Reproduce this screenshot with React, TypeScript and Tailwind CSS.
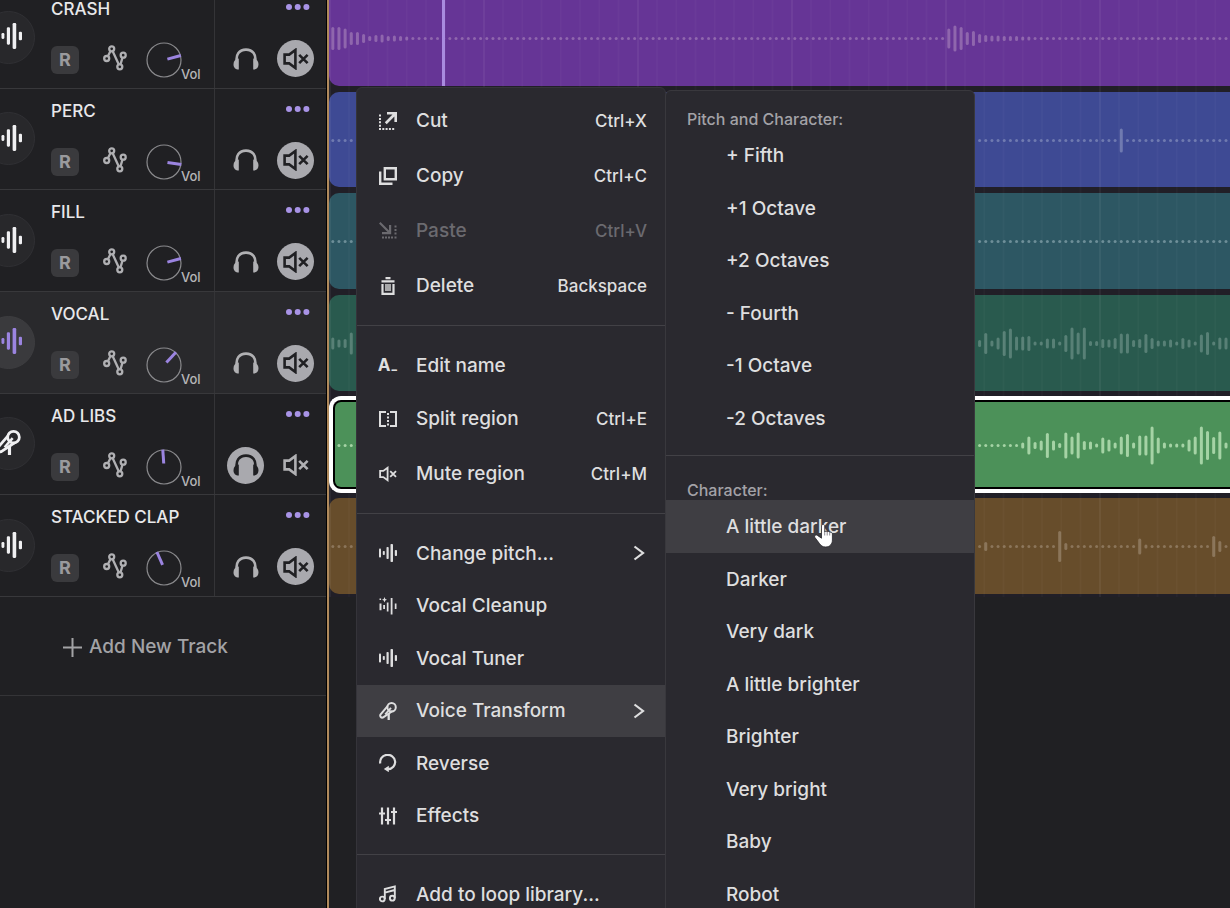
import { useState } from "react";
import type { ReactNode } from "react";
import clsx from "clsx";

type Track = {
  name: string;
  angle: number;
  region: string;
  bar: string;
  icon: "wave" | "mic";
  active?: boolean;
  selected?: boolean;
  solo?: boolean;
  // runs of bar heights, keyed by the index of their first bar
  peaks: Record<number, number[]>;
};

const BAR_PITCH = 6.16;
const BAR_COUNT = 400;

const TRACKS: Track[] = [
  {
    name: "CRASH",
    angle: 75,
    region: "bg-[#663596]",
    bar: "fill-[#8f66ad]",
    icon: "wave",
    peaks: {
      0: [23, 23, 20, 13, 13, 9, 5, 7, 8, 5, 6, 5, 4],
      100: [20, 26, 23, 13, 15, 9, 7, 6, 6, 5, 5, 5, 4, 4],
    },
  },
  {
    name: "PERC",
    angle: 98,
    region: "bg-[#3e4a94]",
    bar: "fill-[#6f7ab0]",
    icon: "wave",
    peaks: { 128: [24] },
  },
  {
    name: "FILL",
    angle: 75,
    region: "bg-[#2d5763]",
    bar: "fill-[#6d8e98]",
    icon: "wave",
    peaks: {},
  },
  {
    name: "VOCAL",
    angle: 43,
    region: "bg-[#295a4e]",
    bar: "fill-[#588076]",
    icon: "wave",
    active: true,
    peaks: {
      0: [12, 8, 9, 22],
      105: [
        7, 21, 6, 12, 25, 30, 14, 14, 15, 4, 4, 10, 10, 4, 17, 32, 22, 32, 5, 5,
        9, 8, 11, 20, 20, 7, 9, 19, 11, 6, 6, 8, 4, 11, 8, 4, 18, 23, 4, 12, 12,
      ],
    },
  },
  {
    name: "AD LIBS",
    angle: -4,
    region: "bg-[#4c9159]",
    bar: "fill-[#a5d3a5]",
    icon: "mic",
    selected: true,
    solo: true,
    peaks: {
      112: [
        6, 18, 7, 10, 25, 10, 5, 26, 18, 26, 9, 8, 4, 16, 12, 6, 18, 23, 6, 20,
        20, 38, 16, 6, 4, 4, 4, 12, 18, 38, 29, 17, 28, 6,
      ],
    },
  },
  {
    name: "STACKED CLAP",
    angle: -24,
    region: "bg-[#674d2b]",
    bar: "fill-[#8b755a]",
    icon: "wave",
    peaks: { 106: [9], 118: [31, 7], 131: [16, 4], 143: [21, 11] },
  },
];

function WaveIcon({ className }: { className?: string }) {
  return (
    <svg viewBox="0 0 18 18" className={className} fill="currentColor">
      <rect x="0" y="4.5" width="2" height="9" rx="0.8" />
      <rect x="3.8" y="7" width="2" height="4" rx="0.8" />
      <rect x="7.5" y="3" width="2.200" height="12" rx="0.8" />
      <rect x="11.500" y="0" width="2.500" height="18" rx="0.8" />
      <rect x="15.800" y="6" width="2.200" height="6" rx="0.8" />
    </svg>
  );
}

function MicIcon({ className }: { className?: string }) {
  return (
    <svg
      viewBox="0 0 18 18"
      className={className}
      fill="none"
      stroke="currentColor"
      strokeWidth="2"
      strokeLinejoin="round"
    >
      <circle cx="12.600" cy="5.200" r="4.200" />
      <path d="M8.600 4.200 1.400 12.600C.7 14.200 2 16 3.800 15.600L13.600 9" />
      <path d="M12 5.800 6.200 12.400" strokeWidth="1.800" />
      <path d="M9.700 11.500V18" strokeWidth="2.300" />
    </svg>
  );
}

function MuteIcon({ className }: { className?: string }) {
  return (
    <svg
      viewBox="0 0 26 22"
      className={className}
      fill="none"
      stroke="currentColor"
      strokeWidth="2.600"
    >
      <path d="M1.600 6.600h4.600L12.400 2v18l-6.200-4.600H1.600z" />
      <path d="m16.200 6.800 8.400 8.400m0-8.400-8.400 8.400" />
    </svg>
  );
}

function HeadphonesIcon() {
  return (
    <svg viewBox="0 0 26 22" className="h-[22px] w-[26px]">
      <path
        d="M4 14.500C2.200 6.500 6.500 1.600 13 1.600S23.800 6.500 22 14.500"
        fill="none"
        stroke="currentColor"
        strokeWidth="2.600"
      />
      <path
        d="M5.800 10.600v11C2.400 21.600.5 19.400.5 16.200s2-5.200 5.300-5.600zM20.200 10.600v11c3.400 0 5.300-2.200 5.300-5.400s-2-5.200-5.300-5.600z"
        fill="currentColor"
      />
    </svg>
  );
}

function NodesIcon() {
  return (
    <svg
      viewBox="0 0 24 26"
      className="h-[26px] w-6"
      fill="none"
      stroke="currentColor"
      strokeWidth="2.300"
    >
      <circle cx="3.700" cy="13.500" r="2.500" />
      <circle cx="8.700" cy="3.800" r="2.500" />
      <circle cx="16.800" cy="21.800" r="2.500" />
      <circle cx="20.200" cy="10.200" r="2.500" />
      <path d="m4.900 11.200 2.600-5.100M9.700 6.200l6.100 13.300M17.500 19.300l2-6.600" />
    </svg>
  );
}

function VolumeKnob({ name, angle }: { name: string; angle: number }) {
  return (
    <label className="ml-[19px] flex items-center">
      <svg viewBox="0 0 36 36" className="size-9 overflow-visible">
        <circle
          cx="18"
          cy="18"
          r="17"
          fill="none"
          stroke="#8a8a8d"
          strokeWidth="1.200"
        />
        <path
          d="M18 14.500V.500"
          stroke="#9b84e0"
          strokeWidth="3"
          transform={`rotate(${angle} 18 18)`}
        />
      </svg>
      <span className="-ml-px mt-7 text-[13px] leading-4 font-medium text-[#b5b5b7]">
        Vol
      </span>
      <input
        type="range"
        aria-label={`${name} volume`}
        className="sr-only"
        defaultValue={70}
      />
    </label>
  );
}

function TrackHeader({ track }: { track: Track }) {
  const [solo, setSolo] = useState(!!track.solo);
  const [muted, setMuted] = useState(!track.solo);

  return (
    <div
      className={clsx(
        "flex border-b border-[#38383b]",
        track.active && "bg-[#29292c]",
      )}
    >
      <div className="flex w-[51px] shrink-0 items-center">
        <div
          className={clsx(
            "-ml-[18px] flex size-[53px] items-center justify-center rounded-full border pb-0.5",
            track.active
              ? "border-[#3d3d40] bg-[#3a3a3d] text-[#9b84e0]"
              : "border-[#303034] bg-[#28282b] text-[#f0f0f2]",
          )}
        >
          {track.icon === "mic" ? (
            <MicIcon className="size-[25px]" />
          ) : (
            <WaveIcon className="size-[26px]" />
          )}
        </div>
      </div>
      <div className="flex-1 pt-[14px]">
        <h2 className="text-[17px] leading-4 font-medium whitespace-nowrap text-[#e8e8ea]">
          {track.name}
        </h2>
        <div className="mt-[25px] flex h-9 items-center text-[#b0b0b3]">
          <button
            aria-label={`Record ${track.name}`}
            className="size-7 rounded-md bg-[#3a3a3d] text-lg leading-7 font-bold text-[#9a9a9d]"
          >
            R
          </button>
          <button aria-label={`Automation ${track.name}`} className="ml-6 pb-1">
            <NodesIcon />
          </button>
          <VolumeKnob name={track.name} angle={track.angle} />
        </div>
      </div>
      <div className="w-28 shrink-0 border-l border-[#343437] px-3 pt-2">
        <div className="flex h-6 items-center justify-end pr-1">
          <button aria-label={`Options ${track.name}`}>
            <svg viewBox="0 0 24 6" className="h-1.5 w-6" fill="#a893e6">
              <circle cx="3" cy="3" r="3" />
              <circle cx="11.700" cy="3" r="3" />
              <circle cx="20.400" cy="3" r="3" />
            </svg>
          </button>
        </div>
        <div className="mt-[21px] flex items-center justify-between">
          <button
            aria-label={`Solo ${track.name}`}
            aria-pressed={solo}
            onClick={() => setSolo(!solo)}
            className={clsx(
              "flex size-[37px] items-center justify-center rounded-full",
              solo ? "bg-[#a9a9ae] text-[#202023]" : "text-[#b0b0b3]",
            )}
          >
            <HeadphonesIcon />
          </button>
          <button
            aria-label={`Mute ${track.name}`}
            aria-pressed={muted}
            onClick={() => setMuted(!muted)}
            className={clsx(
              "flex size-[37px] items-center justify-center rounded-full",
              muted ? "bg-[#a9a9ae] text-[#202023]" : "text-[#b0b0b3]",
            )}
          >
            <MuteIcon className="h-[22px] w-[26px]" />
          </button>
        </div>
      </div>
    </div>
  );
}

function Waveform({ track }: { track: Track }) {
  const heights: number[] = new Array(BAR_COUNT).fill(3);
  Object.entries(track.peaks).forEach(([start, run]) =>
    run.forEach((h, i) => {
      heights[Number(start) + i] = h;
    }),
  );

  return (
    <svg className={clsx("absolute inset-0 size-full", track.bar)}>
      {heights.map((h, i) => (
        <rect
          key={i}
          x={2.3 + i * BAR_PITCH}
          y={48.5 - h / 2}
          width="3"
          height={h}
          rx="1.500"
        />
      ))}
    </svg>
  );
}

// Bar line every 154px, split in eight beats
function GridLines() {
  return (
    <svg className="absolute inset-0 size-full">
      <defs>
        <pattern
          id="beats"
          width="154"
          height="10"
          patternUnits="userSpaceOnUse"
        >
          <rect width="2" height="10" fill="#fff" opacity="0.050" />
          {[1, 2, 3, 4, 5, 6, 7].map((n) => (
            <rect
              key={n}
              x={n * 19.25}
              width="1.500"
              height="10"
              fill="#fff"
              opacity="0.022"
            />
          ))}
        </pattern>
      </defs>
      <rect width="100%" height="100%" fill="url(#beats)" />
    </svg>
  );
}

function Lane({ track }: { track: Track }) {
  if (track.selected) {
    return (
      <div className="relative z-10 py-[2px]">
        <div className="h-full rounded-l-xl border-4 border-r-0 border-white bg-black py-[2px] pl-[2px]">
          <div
            className={clsx(
              "relative h-full overflow-hidden rounded-l-md",
              track.region,
            )}
          >
            <div className="absolute -inset-y-[5px] -left-[6px] right-0">
              <Waveform track={track} />
            </div>
          </div>
        </div>
      </div>
    );
  }
  return (
    <div className="py-[3px]">
      <div
        className={clsx(
          "relative h-full overflow-hidden rounded-l-[10px]",
          track.region,
        )}
      >
        <Waveform track={track} />
      </div>
    </div>
  );
}

function MenuItem({
  icon,
  label,
  shortcut,
  submenu,
  disabled,
  highlighted,
}: {
  icon: ReactNode;
  label: string;
  shortcut?: string;
  submenu?: boolean;
  disabled?: boolean;
  highlighted?: boolean;
}) {
  return (
    <button
      role="menuitem"
      disabled={disabled}
      className={clsx(
        "flex w-full items-center pr-[18px] pl-[22px] text-left font-medium whitespace-nowrap",
        shortcut ? "h-[55px]" : "h-[52px]",
        highlighted && "bg-[#3f3e43]",
        disabled ? "text-[#6b6a6f]" : "text-[#dededf]",
      )}
    >
      <span className="mr-[19px] flex size-[18px] shrink-0 items-center justify-center">
        {icon}
      </span>
      <span className="flex-1 pt-0.5 text-[19px]">{label}</span>
      {shortcut && <span className="pt-0.5 text-[17px]">{shortcut}</span>}
      {submenu && (
        <svg
          viewBox="0 0 12 16"
          className="mr-0.5 h-4 w-3"
          fill="none"
          stroke="currentColor"
          strokeWidth="2.200"
        >
          <path d="m1.500 1.500 8.500 6.500-8.500 6.500" />
        </svg>
      )}
    </button>
  );
}

function Divider() {
  return <hr className="mt-3 mb-[13px] border-[#424146]" />;
}

function CutIcon() {
  return (
    <svg viewBox="0 0 18 18" className="size-[18px]" fill="currentColor">
      <path d="M8 0h10v10h-2.600V4.500l-7.700 7.700L5.800 10.300l7.700-7.700H8z" />
      <path d="M0 2.500h2v2H0zM0 6h2v2H0zM0 9.300h2v2H0zM0 12.700h2v2H0zM0 16h2v2H0zM3.300 16h2v2h-2zM6.600 16h2v2h-2zM9.900 16h2v2h-2zM13.200 16h2v2h-2z" />
    </svg>
  );
}

function CopyIcon() {
  return (
    <svg
      viewBox="0 0 18 18"
      className="size-[18px]"
      fill="none"
      stroke="currentColor"
      strokeWidth="2.400"
    >
      <path d="M5.800 1.200h11v11h-11z" />
      <path d="M1.200 4.500v12.300h12.300" />
    </svg>
  );
}

function PasteIcon() {
  return (
    <svg viewBox="0 0 18 18" className="size-[18px]" fill="currentColor">
      <path d="M1.500 0 10 8.500V3h2.200v9.200H3V10h5.500L0 1.500z" />
      <path d="M15.500 3.500h2v2h-2zM15.500 7h2v2h-2zM15.500 10.500h2v2h-2zM15.500 14.500h2v2h-2zM12 14.500h2v2h-2zM9 14.500h2v2H9zM6 14.500h2v2H6zM3 14.500h2v2H3z" />
    </svg>
  );
}

function DeleteIcon() {
  return (
    <svg
      viewBox="0 0 18 18"
      className="size-[18px]"
      fill="none"
      stroke="currentColor"
      strokeWidth="2.200"
    >
      <path d="M6.500 1.100h5M2.500 4.400h13M3.500 7v9.900h11V7" />
      <path d="M7 7v7M9 7v7M11 7v7" strokeWidth="1.400" />
    </svg>
  );
}

function SplitIcon() {
  return (
    <svg
      viewBox="0 0 18 18"
      className="size-[18px]"
      fill="none"
      stroke="currentColor"
      strokeWidth="2"
    >
      <path d="M7 1.900H1v14.200h6M11 1.900h6v14.200h-6" />
      <path d="M9 3v12.500" strokeDasharray="2 1.500" />
    </svg>
  );
}

function CleanupIcon() {
  return (
    <svg viewBox="0 0 18 18" className="size-[18px]" fill="currentColor">
      <path d="M5.500 0 6.300 2 8 2.800l-1.700.8-.8 2-.8-2L3 2.800 4.700 2z" />
      <path d="M.5 1.500h1.600v1.600H.5zM.5 6.500h2v6.800h-2zM4.200 8h1.800v4H4.200zM7.800 5.500h1.700v9H7.800zM11.700 1h1.800v16.500h-1.800zM15.800 6.500h1.700v5.500h-1.700z" />
    </svg>
  );
}

function ReverseIcon() {
  return (
    <svg
      viewBox="0 0 18 18"
      className="size-[18px]"
      fill="none"
      stroke="currentColor"
      strokeWidth="2.200"
    >
      <path d="M1.300 9.500A7.500 7.200 0 1 1 9 15.200" />
      <path d="m9.800 11.800v6.400L4.800 15z" fill="currentColor" stroke="none" />
    </svg>
  );
}

function EffectsIcon() {
  return (
    <svg
      viewBox="0 0 18 18"
      className="size-[18px]"
      fill="none"
      stroke="currentColor"
      strokeWidth="2.200"
    >
      <path d="M3 .5v17M9 .5v17M15 .5v17M0 6.500h6M6 13h6M12 5h6" />
    </svg>
  );
}

function NoteIcon() {
  return (
    <svg
      viewBox="0 0 18 18"
      className="size-[18px]"
      fill="none"
      stroke="currentColor"
      strokeWidth="1.900"
    >
      <path d="M5.800 14V4l10-2.600v11.800M5.800 7.600l10-2.600" />
      <circle cx="3.300" cy="14" r="2.400" />
      <circle cx="13.300" cy="13.200" r="2.400" />
    </svg>
  );
}

function RegionMenu() {
  return (
    <div
      role="menu"
      className="w-[310px] rounded-t-md border border-[#35343a] bg-[#2a292f] pt-[5px]"
    >
      <MenuItem icon={<CutIcon />} label="Cut" shortcut="Ctrl+X" />
      <MenuItem icon={<CopyIcon />} label="Copy" shortcut="Ctrl+C" />
      <MenuItem icon={<PasteIcon />} label="Paste" shortcut="Ctrl+V" disabled />
      <MenuItem icon={<DeleteIcon />} label="Delete" shortcut="Backspace" />
      <Divider />
      <MenuItem
        icon={<span className="text-[17px] leading-none font-bold">A₋</span>}
        label="Edit name"
      />
      <MenuItem icon={<SplitIcon />} label="Split region" shortcut="Ctrl+E" />
      <MenuItem
        icon={<MuteIcon className="h-4 w-[18px]" />}
        label="Mute region"
        shortcut="Ctrl+M"
      />
      <Divider />
      <div className="grid h-[315px] grid-rows-6">
        <MenuItem
          icon={<WaveIcon className="size-[18px]" />}
          label="Change pitch..."
          submenu
        />
        <MenuItem icon={<CleanupIcon />} label="Vocal Cleanup" />
        <MenuItem
          icon={<WaveIcon className="size-[18px]" />}
          label="Vocal Tuner"
        />
        <MenuItem
          icon={<MicIcon className="size-[18px]" />}
          label="Voice Transform"
          submenu
          highlighted
        />
        <MenuItem icon={<ReverseIcon />} label="Reverse" />
        <MenuItem icon={<EffectsIcon />} label="Effects" />
      </div>
      <Divider />
      <MenuItem icon={<NoteIcon />} label="Add to loop library..." />
    </div>
  );
}

const PITCHES = [
  "+ Fifth",
  "+1 Octave",
  "+2 Octaves",
  "- Fourth",
  "-1 Octave",
  "-2 Octaves",
];

const CHARACTERS = [
  "A little darker",
  "Darker",
  "Very dark",
  "A little brighter",
  "Brighter",
  "Very bright",
  "Baby",
  "Robot",
];

function PresetItem({ label }: { label: string }) {
  return (
    <button
      role="menuitem"
      className={clsx(
        "w-full pt-0.5 pl-[60px] text-left text-[19px] font-medium whitespace-nowrap text-[#dededf]",
        label === "A little darker" && "bg-[#3f3e43]",
      )}
    >
      {label}
    </button>
  );
}

function VoiceMenu() {
  return (
    <div
      role="menu"
      className="mt-[3px] -ml-px w-[310px] rounded-t-md border border-[#39383d] bg-[#2a292f]"
    >
      <h3 className="mt-[18px] pl-[21px] text-base leading-5 font-medium text-[#a3a2a7]">
        Pitch and Character:
      </h3>
      <div className="grid h-[315px] grid-rows-6">
        {PITCHES.map((label) => (
          <PresetItem key={label} label={label} />
        ))}
      </div>
      <hr className="mt-[11px] border-[#424146]" />
      <h3 className="mt-6 pl-[21px] text-base leading-5 font-medium text-[#a3a2a7]">
        Character:
      </h3>
      <div className="grid h-[420px] grid-rows-8">
        {CHARACTERS.map((label) => (
          <PresetItem key={label} label={label} />
        ))}
      </div>
    </div>
  );
}

export default function App() {
  return (
    <div className="relative flex h-screen overflow-hidden bg-[#202023] font-['Inter',sans-serif]">
      <aside className="-mt-[13px] w-[326px] shrink-0">
        <div className="grid h-[610px] grid-rows-6">
          {TRACKS.map((track) => (
            <TrackHeader key={track.name} track={track} />
          ))}
        </div>
        <div className="border-b border-[#343437] pt-9 pb-[34px] pl-[63px]">
          <button className="flex items-center gap-[7px] text-[19px] leading-7 font-medium text-[#a3a3a6]">
            <svg
              viewBox="0 0 19 19"
              className="size-[19px]"
              stroke="currentColor"
              strokeWidth="2"
            >
              <path d="M9.500 0v19M0 9.500h19" />
            </svg>
            Add New Track
          </button>
        </div>
      </aside>

      <main className="min-w-0 flex-1 border-l border-black">
        <div className="flow-root h-full border-l-2 border-[#b08a5c]">
          <div className="relative -mt-[13px] grid h-[610px] grid-rows-6 bg-[#211f27]">
            {TRACKS.map((track) => (
              <Lane key={track.name} track={track} />
            ))}
            <GridLines />
            {/* playhead */}
            <div className="absolute top-0 left-[113px] h-[99px] w-[3px] bg-[#a98bdf]" />
          </div>
        </div>
      </main>

      <div className="absolute top-[87px] left-[356px] z-20 flex items-start">
        <RegionMenu />
        <VoiceMenu />
      </div>

      {/* pointer */}
      <svg
        viewBox="0 0 22 28"
        className="absolute top-[520px] left-[813px] z-30 h-7 w-[22px]"
      >
        <path
          d="M8.500 6c0-2 3.200-2 3.200 0v6c.4-1.200 2.300-1.100 2.500 0 .5-.9 2.200-.7 2.500.4.900-.6 2.700 0 2.700 1.500V20c0 3.800-2.500 7-6.700 7-3.200 0-4.600-1.300-6.200-3.400L1.700 17.200c-.8-1.800 1.200-3 2.700-1.800l4.100 2.800z"
          fill="#fff"
          stroke="#26252a"
          strokeWidth="0.800"
        />
        <path d="M11.700 12v3.500M14.200 12v3.500M16.700 12.500V15.500" stroke="#8d8c91" />
      </svg>
    </div>
  );
}
